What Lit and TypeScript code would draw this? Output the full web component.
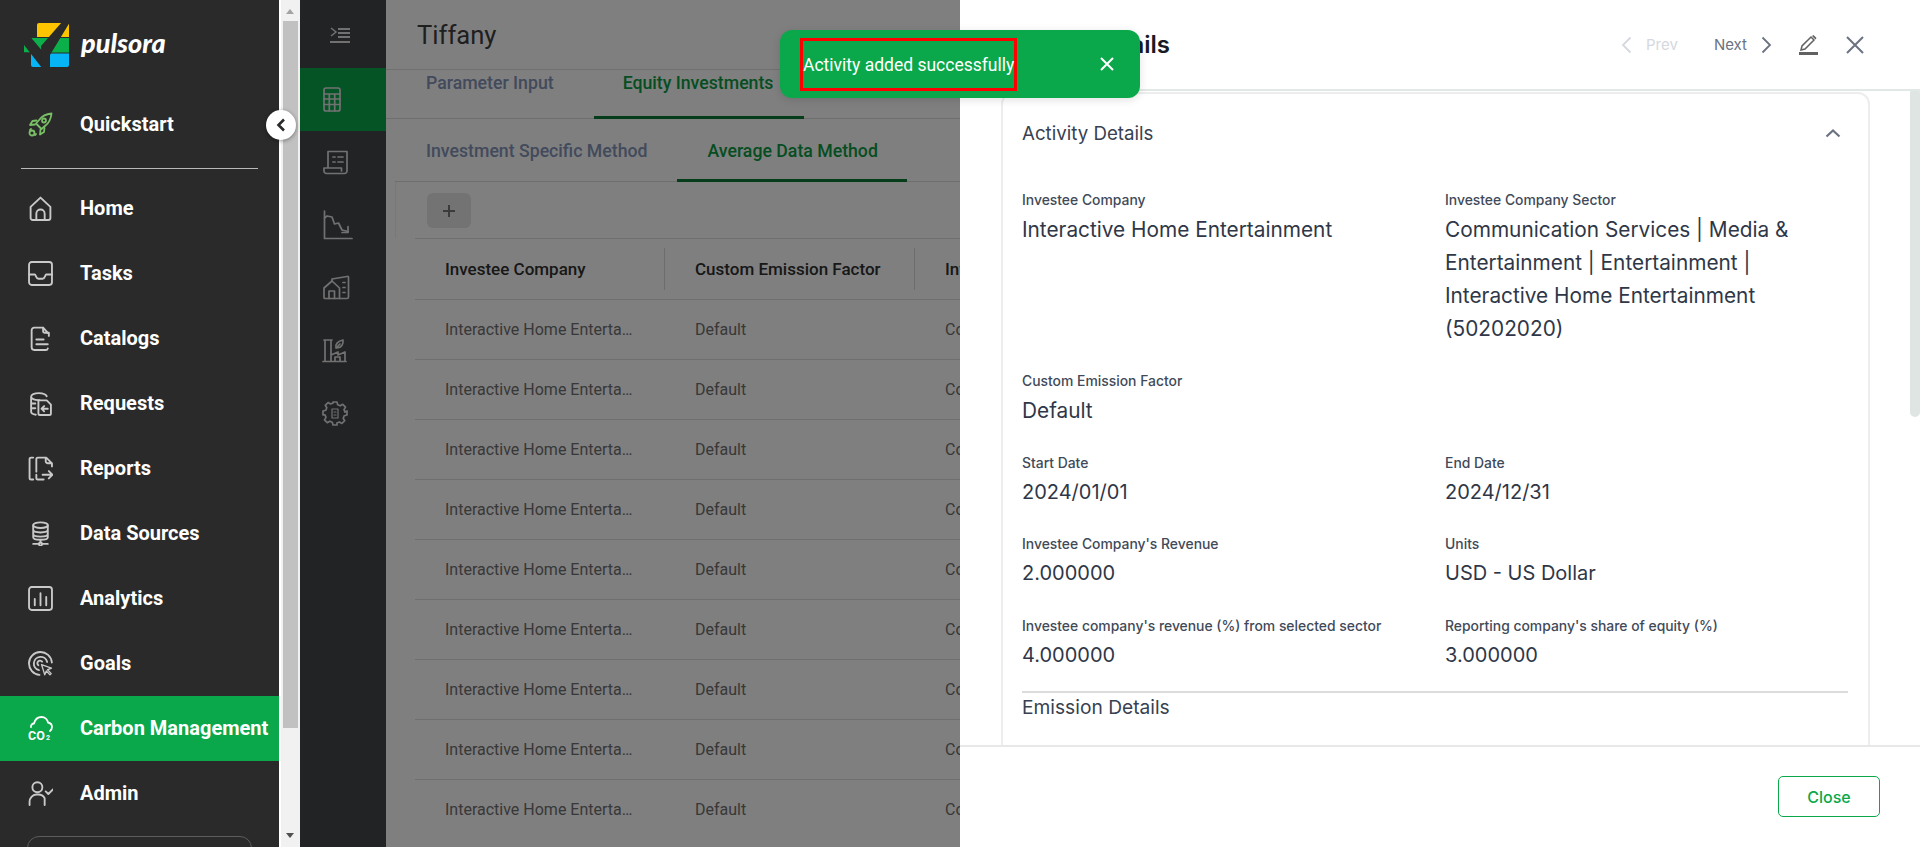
import { LitElement, html, css, svg } from "lit";
import { customElement } from "lit/decorators.js";

const NAV_ICONS: Record<string, unknown> = {
  home: svg`<path d="M2.500 10.500 12 1.500l9.500 9V21a2 2 0 0 1-2 2h-15a2 2 0 0 1-2-2Z"/><path d="M8 23v-6a4 4 0 0 1 8 0v6"/>`,
  tasks: svg`<rect x="1" y="1" width="22" height="22" rx="2.500"/><path d="M1 13h5.500c1.200 0 1 4 3.500 4h4c2.500 0 2.300-4 3.500-4H23"/>`,
  catalogs: svg`<path d="M19 6.500 14.500 1.500H6a2.500 2.500 0 0 0-2.500 2.500v16.500A2.500 2.500 0 0 0 6 23h11a2 2 0 0 0 2-1.500"/><path d="M14.500 1.500V5a1.500 1.500 0 0 0 1.500 1.500h4v3M8 13h7M8 17.500h11"/>`,
  requests: svg`<path d="M3 5.500v14.500c0 1.500 2 2.500 4.500 2.800M3 5.500C3 3.500 6 2 10.500 2S17 3 18 5M3 5.500c0 1.800 3 3.200 7 3.200h1M3 12h4M3 16.500h4"/><path d="M10 9h8l4 4v8.500a1.500 1.500 0 0 1-1.500 1.500H11.500a1.500 1.500 0 0 1-1.500-1.500Z"/><path d="M19 17h-6m2.500-2.500L13 17l2.500 2.500"/>`,
  reports: svg`<path d="M5 1.500H3A1.500 1.500 0 0 0 1.500 3v18A1.500 1.500 0 0 0 3 22.500h2"/><path d="M8 15V3a1.500 1.500 0 0 1 1.500-1.500h8L23 7v3M17 1.500V5a2 2 0 0 0 2 2h4M8 18v3a1.500 1.500 0 0 0 1.500 1.500H15"/><path d="M14 18h9m-3-3.500 3.500 3.500-3.500 3.500"/>`,
  data: svg`<ellipse cx="12" cy="4" rx="7" ry="2.700"/><path d="M5 4v11.500c0 1.500 3 2.500 7 2.500s7-1 7-2.500V4M5 8.500c0 1.500 3 2.500 7 2.500s7-1 7-2.500M5 12.500c0 1.500 3 2.500 7 2.500s7-1 7-2.500M12 18v3"/><circle cx="12" cy="22" r="1.500"/><path d="M5 22h5.500m3 0H19"/>`,
  analytics: svg`<rect x="1" y="1" width="22" height="22" rx="2.500"/><path d="M6.500 12.500v6M12 7v11.500M17.500 10.500v8"/>`,
  goals: svg`<path d="M11 22.900A11 11 0 1 1 22.900 11"/><path d="M10.500 18.400A6.500 6.500 0 1 1 18.400 10.500"/><path d="M10 13.700a2.500 2.500 0 1 1 3.500-3.500"/><path d="m13 13 9.500 3.500-3.700 1.500 3.500 3.700-1.200 1.200-3.500-3.700-1.500 3.700Z" stroke-width="1.300"/>`,
  admin: svg`<circle cx="9" cy="6" r="4.800"/><path d="M1.500 23v-3A7 7 0 0 1 8 13h2a7 7 0 0 1 6 3.500V23"/><path d="m17 10 2.500 2.500L24 8"/>`,
};

const RAIL_ICONS: Record<string, unknown> = {
  calc: svg`<rect x="1" y="1" width="16" height="23" rx="2"/><path d="M1 7h16M1 12h16M1 17.500h16M6.300 7v17M11.700 7v17"/>`,
  ledger: svg`<path d="M5 18V1.500h19V21a2.500 2.500 0 0 1-2.500 2.500H3.500A2.500 2.500 0 0 1 1 21v-3h17.500v3"/><path d="M10 7h2M15 7h5M10 12h2M15 12h5"/>`,
  chart: svg`<path d="M1.500 0v27.500H29"/><path d="M1.500 7 4 5l5 1 2.500 7 4-1 3.500 7 6 1.500" /><path d="M25 15.500v6h-6"/>`,
  buildings: svg`<path d="M1 12 9 5l7.500 7v10.500H2A1 1 0 0 1 1 21.500Z"/><path d="M6 22.500V15h5.500v7.500"/><path d="M9 5V3l15-2.500a1 1 0 0 1 1.500 1V21a1.500 1.500 0 0 1-1.500 1.500h-7"/><path d="M20 6.500h2M20 11.500h2M20 16.500h2"/>`,
  factory: svg`<path d="M0 22.500h23M2 22.500V1h6v21.500M1 1h8M8 16l7-3v3l7-3v9.500M12 22.500V18h5v4.500"/><path d="M13 9c-1-4 2-7 7-8 .5 4-1.500 8-6 8Zm0 0 4-4"/>`,
  gear: svg`<path d="M10 1h4l.7 2.800 2.500 1 2.500-1.500 2.800 2.800-1.500 2.500 1 2.500L24 10v4l-2.800.7-1 2.500 1.500 2.500-2.800 2.800-2.500-1.500-2.500 1L14 24h-4l-.7-2.800-2.500-1-2.500 1.500-2.800-2.800 1.500-2.500-1-2.500L0 14v-4l2.800-.7 1-2.500L2.300 4.300l2.800-2.800 2.500 1.500 2.500-1Z"/><path d="M9 8h6v9H9ZM11 11h2M11 14h2" stroke-width="1.200"/>`,
};

const NAV = [
  { key: "home", label: "Home" },
  { key: "tasks", label: "Tasks" },
  { key: "catalogs", label: "Catalogs" },
  { key: "requests", label: "Requests" },
  { key: "reports", label: "Reports" },
  { key: "data", label: "Data Sources" },
  { key: "analytics", label: "Analytics" },
  { key: "goals", label: "Goals" },
  { key: "carbon", label: "Carbon Management", active: true },
  { key: "admin", label: "Admin" },
];

const FIELDS = [
  { label: "Investee Company", value: "Interactive Home Entertainment" },
  {
    label: "Investee Company Sector",
    value:
      "Communication Services | Media & Entertainment | Entertainment | Interactive Home Entertainment (50202020)",
  },
  { label: "Custom Emission Factor", value: "Default", wide: true },
  { label: "Start Date", value: "2024/01/01", num: true },
  { label: "End Date", value: "2024/12/31", num: true },
  { label: "Investee Company's Revenue", value: "2.000000", num: true },
  { label: "Units", value: "USD - US Dollar", num: true },
  { label: "Investee company's revenue (%) from selected sector", value: "4.000000", num: true },
  { label: "Reporting company's share of equity (%)", value: "3.000000", num: true },
];

@customElement("app-root")
export class AppRoot extends LitElement {
  static styles = css`
    :host {
      display: flex;
      position: relative;
      width: 1920px;
      height: 847px;
      overflow: hidden;
      background: #fff;
      font-family: Roboto, "Liberation Sans", sans-serif;
    }

    /* left navigation */
    .sidebar {
      width: 279px;
      flex: none;
      background: #2a2a2a;
      color: #fff;
    }
    .brand {
      height: 92px;
      display: flex;
      align-items: flex-start;
      padding: 22px 0 0 24px;
      gap: 11px;
      box-sizing: border-box;
    }
    .brand svg {
      width: 46px;
      height: 46px;
      flex: none;
    }
    .wordmark {
      font-family: Lato, sans-serif;
      font-style: italic;
      font-weight: 900;
      font-size: 27px;
      line-height: 42px;
      color: #fff;
    }
    .nav-row {
      height: 65px;
      display: flex;
      align-items: center;
      padding-left: 28px;
      gap: 27px;
      font-size: 20px;
      font-weight: 700;
      white-space: nowrap;
    }
    .nav-row span {
      padding-bottom: 2px;
    }
    .nav-row svg {
      width: 25px;
      height: 25px;
      flex: none;
      fill: none;
      stroke: #c9c9c9;
      stroke-width: 1.800;
      stroke-linecap: round;
      stroke-linejoin: round;
    }
    .nav-row.active {
      background: #0aa84a;
    }
    .nav-row.active svg {
      stroke: #fff;
    }
    .nav-row svg text {
      fill: #fff;
      stroke: none;
      font-family: Roboto, sans-serif;
      font-weight: 700;
    }
    .rule {
      height: 1px;
      margin: 11px 21px 7px;
      background: #b9b9b9;
    }
    .org-box {
      height: 60px;
      margin: 10px 27px 0;
      border: 1px solid #5c5c5c;
      border-radius: 12px;
    }

    /* page scrollbar */
    .page-scroll {
      width: 21px;
      flex: none;
      box-sizing: border-box;
      background: #f1f1f1;
      padding: 21px 2px 0;
      border-left: 2px solid #fff;
      display: flex;
      flex-direction: column;
      align-items: stretch;
      position: relative;
    }
    .page-thumb {
      height: 707px;
      background: #c1c1c1;
    }
    .page-arrow {
      position: absolute;
      left: 5px;
      width: 0;
      height: 0;
      border-left: 4px solid transparent;
      border-right: 4px solid transparent;
    }
    .page-arrow.up {
      top: 9px;
      border-bottom: 5px solid #a3a3a3;
    }
    .page-arrow.down {
      bottom: 9px;
      border-top: 5px solid #505050;
    }
    .collapse {
      position: absolute;
      left: 266px;
      top: 110px;
      width: 30px;
      height: 30px;
      border-radius: 50%;
      background: #fff;
      box-shadow: 0 1px 4px rgba(0, 0, 0, 0.4);
      display: flex;
      align-items: center;
      justify-content: center;
      z-index: 5;
    }
    .collapse svg {
      width: 12px;
      height: 14px;
    }

    /* icon rail */
    .rail {
      width: 86px;
      flex: none;
      background: #44474a;
    }
    .rail-toggle {
      height: 68px;
      box-sizing: border-box;
      padding: 27px 0 0 30px;
    }
    .rail-toggle svg {
      display: block;
      width: 21px;
      height: 16px;
    }
    .rail-item {
      height: 62.700px;
      display: flex;
      align-items: center;
      padding-left: 23px;
    }
    .rail-item.active {
      background: #0aa84a;
    }
    .rail-item svg {
      fill: none;
      stroke: #e2e2e2;
      stroke-width: 1.700;
      stroke-linejoin: round;
      stroke-linecap: round;
      overflow: visible;
    }

    /* page behind the drawer */
    .content {
      flex: 1;
      min-width: 0;
      background: #fff;
      overflow: hidden;
    }
    .title {
      height: 70px;
      box-sizing: border-box;
      padding: 20px 0 0 31px;
      font-size: 25.600px;
      line-height: 30px;
      color: #3e3e3e;
      border-bottom: 1px solid #e0e0e0;
    }
    .tabs {
      display: flex;
      height: 49px;
      box-sizing: border-box;
      border-bottom: 1px solid #dcdcdc;
      padding-left: 13px;
      font-size: 17.700px;
      font-weight: 500;
      color: #8494b8;
    }
    .tab {
      padding: 0 40px 0 27px;
      line-height: 28px;
      white-space: nowrap;
      margin-top: -1px;
    }
    .tab.on {
      color: #0c9c44;
      padding: 0 0 0 29px;
      width: 210px;
      box-sizing: border-box;
      height: 50px;
      border-bottom: 3px solid #0b7a36;
    }
    .tabs.sub {
      height: 63px;
      margin-left: 9px;
      padding-left: 31px;
    }
    .tabs.sub .tab {
      padding: 18px 29px 0 0;
      margin: 0;
      box-sizing: border-box;
    }
    .tabs.sub .tab.on {
      width: 230px;
      height: 63px;
      padding: 18px 0 0 31px;
    }
    .tool-row {
      height: 56px;
      margin-left: 9px;
      box-sizing: border-box;
      padding: 11px 0 0 31px;
      border-left: 1px solid #f0f0f0;
    }
    .add-btn {
      width: 44px;
      height: 35px;
      border-radius: 6px;
      background: #e6e6e6;
      display: flex;
      align-items: center;
      justify-content: center;
    }
    .add-btn svg {
      width: 14px;
      height: 14px;
    }
    .table {
      margin-left: 29px;
    }
    .row {
      display: grid;
      grid-template-columns: 250px 250px 45px;
      height: 60px;
      align-items: center;
      border-top: 1px solid #dedede;
      box-sizing: border-box;
      font-size: 16px;
      color: #707070;
    }
    .row.head {
      height: 61px;
      font-size: 17px;
      font-weight: 500;
      color: #303030;
    }
    .cell {
      padding: 0 30px;
      white-space: nowrap;
      overflow: hidden;
      text-overflow: ellipsis;
    }
    .cell.clip {
      padding-right: 0;
      text-overflow: clip;
    }
    .row.head .cell {
      height: 42px;
      line-height: 42px;
      border-right: 1px solid #dadada;
    }
    .row.head .cell.clip {
      border-right: 0;
    }

    /* overlay, drawer, toast */
    .overlay {
      position: absolute;
      left: 300px;
      top: 0;
      right: 0;
      bottom: 0;
      background: rgba(0, 0, 0, 0.5);
    }
    .drawer {
      position: absolute;
      left: 960px;
      top: 0;
      right: 0;
      bottom: 0;
      background: #fff;
      display: flex;
      flex-direction: column;
      font-family: Inter, sans-serif;
    }
    .drawer-head {
      height: 91px;
      flex: none;
      box-sizing: border-box;
      border-bottom: 2px solid #e2e8e5;
      display: flex;
      align-items: center;
      padding: 0 55px 0 35px;
    }
    .drawer-title {
      flex: 1;
      font-size: 24px;
      font-weight: 600;
      color: #161b26;
    }
    .pager {
      display: flex;
      align-items: center;
      font-size: 15px;
      color: #6b7280;
    }
    .pager.off {
      color: #d5d8de;
      margin-right: 36px;
    }
    .pager svg {
      width: 11px;
      height: 18px;
      fill: none;
      stroke: currentColor;
      stroke-width: 1.800;
    }
    .pager.off svg {
      margin-right: 14px;
    }
    .pager.next svg {
      margin-left: 14px;
    }
    .edit {
      margin-left: 26px;
      width: 20px;
      height: 20px;
    }
    .close-x {
      margin-left: 27px;
      width: 20px;
      height: 20px;
      stroke: #6b7280;
      stroke-width: 2;
      fill: none;
    }
    .drawer-body {
      flex: 1;
      min-height: 0;
      display: flex;
      overflow: hidden;
    }
    .card {
      margin: 1px 0 0 41px;
      width: 869px;
      box-sizing: border-box;
      height: 700px;
      flex: none;
      border: 2px solid #ededed;
      border-radius: 12px 12px 0 0;
      padding: 0 20px 0 19px;
    }
    .card-head {
      height: 78px;
      display: flex;
      align-items: center;
      justify-content: space-between;
      font-size: 18.700px;
      color: #374151;
    }
    .card-head svg {
      width: 16px;
      height: 10px;
      margin-right: 7px;
      fill: none;
      stroke: #6b7280;
      stroke-width: 2.200;
    }
    .fields {
      display: grid;
      grid-template-columns: 423px 1fr;
      row-gap: 25.800px;
      margin-top: 18px;
    }
    .field.wide {
      grid-column: 1 / -1;
    }
    .field-label {
      font-size: 13.900px;
      font-weight: 500;
      line-height: 20px;
      color: #414a59;
      margin-bottom: 3px;
    }
    .field-value {
      font-size: 20.800px;
      line-height: 33px;
      color: #2f3747;
      max-width: 370px;
    }
    .field-value.num {
      font-size: 20px;
    }
    .divider {
      height: 2px;
      margin-top: 19px;
      background: #dcdcdc;
    }
    .sub-head {
      margin-top: 2px;
      font-size: 19.200px;
      line-height: 24px;
      color: #374151;
    }
    .drawer-track {
      margin-left: 40px;
      width: 10px;
      flex: none;
    }
    .drawer-thumb {
      height: 329px;
      margin-top: -3px;
      border-radius: 5px;
      background: #dfe5e2;
    }
    .drawer-foot {
      height: 102px;
      flex: none;
      box-sizing: border-box;
      border-top: 2px solid #e8e8e8;
      display: flex;
      justify-content: flex-end;
      padding: 29px 40px 0 0;
    }
    .close-btn {
      width: 102px;
      height: 41px;
      box-sizing: border-box;
      border: 1.500px solid #0aa84a;
      border-radius: 5px;
      background: #fff;
      color: #0aa84a;
      font: 500 16px Inter, sans-serif;
    }
    .toast {
      position: absolute;
      left: 780px;
      top: 30px;
      width: 360px;
      height: 68px;
      box-sizing: border-box;
      padding: 8px 0 0 20px;
      border-radius: 12px;
      background: #0aa84a;
      box-shadow: 0 2px 8px rgba(0, 0, 0, 0.12);
      display: flex;
      align-items: flex-start;
    }
    .toast-text {
      width: 217px;
      height: 53px;
      box-sizing: border-box;
      border: 3px solid #ff0000;
      color: #fff;
      font-size: 17.500px;
      line-height: 49px;
      white-space: nowrap;
    }
    .toast svg {
      width: 16px;
      height: 16px;
      margin: 18px 0 0 82px;
      fill: none;
      stroke: #fff;
      stroke-width: 2;
    }
  `;

  private logo() {
    return html`<svg viewBox="24 22 46 46">
      <path d="M39 23h30v14H37v-12a2 2 0 0 1 2-2Z" fill="#fdc500" />
      <rect x="24" y="38" width="45" height="14.500" fill="#0cb04a" />
      <path d="M24 53.500h45V65a2 2 0 0 1-2 2H33a2 2 0 0 1-2-2Z" fill="#05b5f5" />
      <path d="M24 37h6.500L44 53l-1 15h-1L24 45Z" fill="#2a2a2a" />
      <path d="M22 38h2v14h-2ZM24 23h13v15H24Z" fill="#2a2a2a" />
      <path d="M24 52.500h7V68h-7Z" fill="#2a2a2a" />
      <path d="M62 22h8l-20 33v13h-8l-1-22Z" fill="#2a2a2a" />
    </svg>`;
  }

  private rocket() {
    return html`<svg viewBox="0 0 25 25" style="stroke:#79bf66;">
      <path d="M23.500 1.500c-5 .5-9 2-12 6L8 11.500l5.500 5.500 4-3.500c4-3 5.500-7 6-12Z" />
      <path d="M8.500 8.500 4.500 9 2 13l5-.5M16.500 16l-.5 4-4 2.500.5-5" />
      <circle cx="16" cy="8.500" r="2" />
      <circle cx="4" cy="21" r="2.500" />
      <path d="M3 17l-1 1M8 22l-1 1" />
    </svg>`;
  }

  private navIcon(key: string) {
    if (key === "carbon") {
      return svg`<svg viewBox="0 0 25 25">
        <path d="M3 11a3 3 0 0 1 3-3.500C7 3.500 10 1 13.500 1c3.500 0 6 2.500 6.500 5.500 2.500.5 4 2.500 4 4.500 0 1.500-.8 3-2 4" />
        <text x="0" y="24" font-size="12.500">CO</text>
        <text x="18" y="24" font-size="7">2</text>
      </svg>`;
    }
    return svg`<svg viewBox="0 0 24 24">${NAV_ICONS[key]}</svg>`;
  }

  private railIcon(key: string, w: number, h: number) {
    return svg`<svg width=${w} height=${h} viewBox="0 0 ${w} ${h}">${RAIL_ICONS[key]}</svg>`;
  }

  render() {
    const rows = Array.from({ length: 9 });
    return html`
      <nav class="sidebar">
        <div class="brand">${this.logo()}<span class="wordmark">pulsora</span></div>
        <div class="nav-row">${this.rocket()}<span>Quickstart</span></div>
        <div class="rule"></div>
        ${NAV.map(
          (n) => html`<div class="nav-row ${n.active ? "active" : ""}">
            ${this.navIcon(n.key)}<span>${n.label}</span>
          </div>`
        )}
        <div class="org-box"></div>
      </nav>
      <div class="page-scroll">
        <div class="page-arrow up"></div>
        <div class="page-thumb"></div>
        <div class="page-arrow down"></div>
      </div>
      <div class="rail">
        <div class="rail-toggle">
          <svg viewBox="0 0 21 16" fill="none" stroke="#e2e2e2" stroke-width="2">
            <path d="m1 1 5 4-5 4" stroke-width="1.500" />
            <path d="M8 2h12M8 6h12M8 10h12M0 15h20" />
          </svg>
        </div>
        <div class="rail-item active">${this.railIcon("calc", 18, 25)}</div>
        <div class="rail-item">${this.railIcon("ledger", 25, 24)}</div>
        <div class="rail-item">${this.railIcon("chart", 29, 28)}</div>
        <div class="rail-item">${this.railIcon("buildings", 26, 23)}</div>
        <div class="rail-item">${this.railIcon("factory", 23, 23)}</div>
        <div class="rail-item">${this.railIcon("gear", 24, 24)}</div>
      </div>
      <main class="content">
        <div class="title">Tiffany</div>
        <div class="tabs">
          <div class="tab">Parameter Input</div>
          <div class="tab on">Equity Investments</div>
        </div>
        <div class="tabs sub">
          <div class="tab">Investment Specific Method</div>
          <div class="tab on">Average Data Method</div>
        </div>
        <div class="tool-row">
          <div class="add-btn">
            <svg viewBox="0 0 14 14" stroke="#777" stroke-width="2"><path d="M7 1v12M1 7h12" /></svg>
          </div>
        </div>
        <div class="table">
          <div class="row head">
            <div class="cell">Investee Company</div>
            <div class="cell">Custom Emission Factor</div>
            <div class="cell clip">Investee Company Sector</div>
          </div>
          ${rows.map(
            () => html`<div class="row">
              <div class="cell">Interactive Home Entertainment</div>
              <div class="cell">Default</div>
              <div class="cell clip">Communication Services</div>
            </div>`
          )}
        </div>
      </main>

      <div class="collapse">
        <svg viewBox="0 0 12 14" fill="none" stroke="#2a2a2a" stroke-width="2.600"><path d="M9 1.500 3.500 7 9 12.500" /></svg>
      </div>
      <div class="overlay"></div>

      <aside class="drawer">
        <header class="drawer-head">
          <div class="drawer-title">Activity Details</div>
          <div class="pager off">
            <svg viewBox="0 0 11 18"><path d="M9.500 1.500 2 9l7.500 7.500" /></svg>Prev
          </div>
          <div class="pager next">
            Next<svg viewBox="0 0 11 18"><path d="M1.500 1.500 9 9l-7.500 7.500" /></svg>
          </div>
          <svg class="edit" viewBox="0 0 20 20">
            <path d="M1 20v-3h19v3Z" fill="#616161" />
            <path d="M3 15l1-4 9-9 3 3-9 9Z" fill="none" stroke="#616161" stroke-width="1.500" />
            <path d="m14 1 1.500-1 3 3-1 1.500Z" fill="#616161" />
          </svg>
          <svg class="close-x" viewBox="0 0 20 20"><path d="m2 2 16 16M18 2 2 18" /></svg>
        </header>
        <div class="drawer-body">
          <section class="card">
            <div class="card-head">
              <span>Activity Details</span>
              <svg viewBox="0 0 16 10"><path d="m1.500 8.500 6.500-6 6.500 6" /></svg>
            </div>
            <div class="fields">
              ${FIELDS.map(
                (f) => html`<div class="field ${f.wide ? "wide" : ""}">
                  <div class="field-label">${f.label}</div>
                  <div class="field-value ${f.num ? "num" : ""}">${f.value}</div>
                </div>`
              )}
            </div>
            <div class="divider"></div>
            <div class="sub-head">Emission Details</div>
          </section>
          <div class="drawer-track"><div class="drawer-thumb"></div></div>
        </div>
        <footer class="drawer-foot"><button class="close-btn">Close</button></footer>
      </aside>

      <div class="toast">
        <div class="toast-text">Activity added successfully</div>
        <svg viewBox="0 0 16 16"><path d="m2 2 12 12M14 2 2 14" /></svg>
      </div>
    `;
  }
}

declare global {
  interface HTMLElementTagNameMap {
    "app-root": AppRoot;
  }
}
